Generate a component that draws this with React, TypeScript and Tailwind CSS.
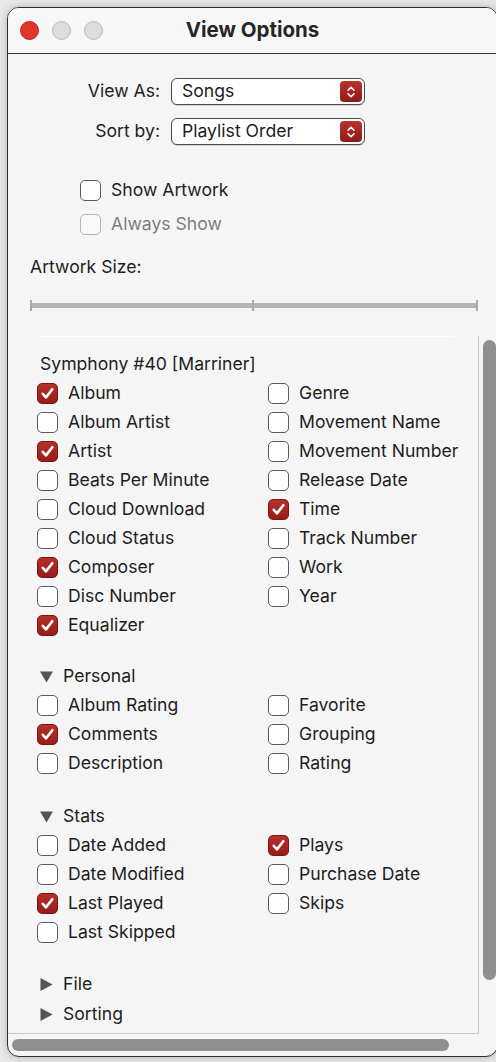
import React from 'react';

type Item = { label: string; checked?: boolean };

const mainLeft: Item[] = [
  { label: 'Album', checked: true },
  { label: 'Album Artist' },
  { label: 'Artist', checked: true },
  { label: 'Beats Per Minute' },
  { label: 'Cloud Download' },
  { label: 'Cloud Status' },
  { label: 'Composer', checked: true },
  { label: 'Disc Number' },
  { label: 'Equalizer', checked: true },
];

const mainRight: Item[] = [
  { label: 'Genre' },
  { label: 'Movement Name' },
  { label: 'Movement Number' },
  { label: 'Release Date' },
  { label: 'Time', checked: true },
  { label: 'Track Number' },
  { label: 'Work' },
  { label: 'Year' },
];

const personalLeft: Item[] = [
  { label: 'Album Rating' },
  { label: 'Comments', checked: true },
  { label: 'Description' },
];

const personalRight: Item[] = [{ label: 'Favorite' }, { label: 'Grouping' }, { label: 'Rating' }];

const statsLeft: Item[] = [
  { label: 'Date Added' },
  { label: 'Date Modified' },
  { label: 'Last Played', checked: true },
  { label: 'Last Skipped' },
];

const statsRight: Item[] = [{ label: 'Plays', checked: true }, { label: 'Purchase Date' }, { label: 'Skips' }];

const Box: React.FC<{ checked?: boolean; disabled?: boolean }> = ({ checked, disabled }) => {
  if (checked) {
    return (
      <span className="flex h-[21px] w-[21px] shrink-0 items-center justify-center rounded-[5px] border border-[#7a1512] bg-gradient-to-b from-[#b8302b] to-[#971c19]">
        <svg width="15" height="15" viewBox="0 0 15 15">
          <path d="M2.8 7.8 L6 11.4 L12.3 3.2" fill="none" stroke="white" strokeWidth="2.6" strokeLinecap="round" strokeLinejoin="round" />
        </svg>
      </span>
    );
  }
  return (
    <span
      className={
        disabled
          ? 'h-[21px] w-[21px] shrink-0 rounded-[5px] border border-[#b4b4b4] bg-[#f9f9f9]'
          : 'h-[21px] w-[21px] shrink-0 rounded-[5px] border border-[#5a5a5a] bg-white'
      }
    />
  );
};

const Row: React.FC<{ item: Item }> = ({ item }) => (
  <div className="flex h-[29px] items-center">
    <Box checked={item.checked} />
    <span className="ml-[10px] whitespace-nowrap">{item.label}</span>
  </div>
);

const Columns: React.FC<{ left: Item[]; right: Item[] }> = ({ left, right }) => (
  <div className="flex">
    <div className="w-[231px]">
      {left.map((it) => (
        <Row key={it.label} item={it} />
      ))}
    </div>
    <div>
      {right.map((it) => (
        <Row key={it.label} item={it} />
      ))}
    </div>
  </div>
);

const Disclosure: React.FC<{ label: string; open?: boolean; className?: string }> = ({ label, open, className }) => (
  <div className={`flex h-[30px] items-center pl-[3px] ${className ?? ''}`}>
    <svg width="13" height="13" viewBox="0 0 13 13" className="shrink-0">
      {open ? <path d="M0 1.5 L13 1.5 L6.5 12.5 Z" fill="#555" /> : <path d="M0.5 0 L12.5 6.5 L0.5 13 Z" fill="#555" />}
    </svg>
    <span className="ml-[10px]">{label}</span>
  </div>
);

const Popup: React.FC<{ value: string }> = ({ value }) => (
  <div className="flex h-[27px] w-[194px] items-center justify-between rounded-[6px] border border-[#4a4a4a] bg-white pl-[10px] pr-[2px] shadow-[0_1px_1px_rgba(0,0,0,0.15)]">
    <span>{value}</span>
    <span className="flex h-[21px] w-[22px] items-center justify-center rounded-[4px] bg-gradient-to-b from-[#bb322d] to-[#8e1a17]">
      <svg width="10" height="14" viewBox="0 0 10 14">
        <path d="M2 5.2 L5 2.2 L8 5.2 M2 8.8 L5 11.8 L8 8.8" fill="none" stroke="white" strokeWidth="1.6" strokeLinecap="round" strokeLinejoin="round" />
      </svg>
    </span>
  </div>
);

const App: React.FC = () => {
  return (
    <div className="h-[1062px] w-[496px] overflow-hidden bg-[#e9e9e9] pl-[7px] pt-[7px] font-['Inter','Liberation_Sans',sans-serif] text-[17.6px] text-[#1d1d1d]">
      <div className="flex h-[1050px] w-[491px] flex-col overflow-hidden rounded-[12px] border border-[#2e2e2e] bg-[#f5f5f5] shadow-[0_0_8px_rgba(0,0,0,0.25)]">
        {/* title bar */}
        <div className="relative flex h-[46px] shrink-0 items-center border-b border-[#3a3a3a] bg-[#f7f7f7]">
          <div className="flex items-center gap-[13px] pl-[12px]">
            <span className="h-[19px] w-[19px] rounded-full border border-[#b9221b] bg-[#e0352b]" />
            <span className="h-[19px] w-[19px] rounded-full border border-[#bdbdbd] bg-[#dcdcdc]" />
            <span className="h-[19px] w-[19px] rounded-full border border-[#bdbdbd] bg-[#dcdcdc]" />
          </div>
          <div className="absolute left-0 right-0 top-0 flex h-[45px] items-center justify-center text-[20.5px] font-bold text-[#262626]">
            View Options
          </div>
        </div>

        {/* popups */}
        <div className="mt-[24px] flex items-center">
          <span className="w-[152px] text-right">View As:</span>
          <div className="ml-[11px]">
            <Popup value="Songs" />
          </div>
        </div>
        <div className="mt-[13px] flex items-center">
          <span className="w-[152px] text-right">Sort by:</span>
          <div className="ml-[11px]">
            <Popup value="Playlist Order" />
          </div>
        </div>

        {/* artwork */}
        <div className="ml-[72px] mt-[30px] flex h-[30px] items-center">
          <Box />
          <span className="ml-[10px]">Show Artwork</span>
        </div>
        <div className="ml-[72px] mt-[4px] flex h-[30px] items-center text-[#7d7d7d]">
          <Box disabled />
          <span className="ml-[10px]">Always Show</span>
        </div>
        <div className="ml-[22px] mt-[18px] h-[20px] leading-[20px]">Artwork Size:</div>
        <div className="relative ml-[22px] mt-[23px] h-[11px] w-[448px]">
          <div className="absolute left-0 right-0 top-[3px] h-[5px] bg-[#b4b4b4]" />
          <div className="absolute left-0 top-0 h-[11px] w-[2px] bg-[#a9a9a9]" />
          <div className="absolute left-[222px] top-0 h-[11px] w-[2px] bg-[#a9a9a9]" />
          <div className="absolute right-0 top-0 h-[11px] w-[2px] bg-[#a9a9a9]" />
        </div>

        {/* scroll area */}
        <div className="mt-[25px] flex min-h-0 flex-1">
          <div className="flex w-[471px] flex-col border-b border-r border-[#c9c9c9]">
            <div className="ml-[30px] h-px w-[416px] bg-white" />
            <div className="flex-1 overflow-hidden pl-[29px]">
              <div className="mt-[12px] flex h-[30px] items-center pl-[3px]">Symphony #40 [Marriner]</div>
              <Columns left={mainLeft} right={mainRight} />
              <Disclosure label="Personal" open className="mt-[21px]" />
              <Columns left={personalLeft} right={personalRight} />
              <Disclosure label="Stats" open className="mt-[23px]" />
              <Columns left={statsLeft} right={statsRight} />
              <Disclosure label="File" className="mt-[22px]" />
              <Disclosure label="Sorting" />
            </div>
          </div>
          <div className="flex-1 pl-[4px] pt-[4px]">
            <div className="h-[640px] w-[13px] rounded-full bg-[#8f8f8f]" />
          </div>
        </div>
        <div className="h-[22px] shrink-0 pl-[4px] pt-[5px]">
          <div className="h-[12px] w-[437px] rounded-full bg-[#8f8f8f]" />
        </div>
      </div>
    </div>
  );
};

export default App;
